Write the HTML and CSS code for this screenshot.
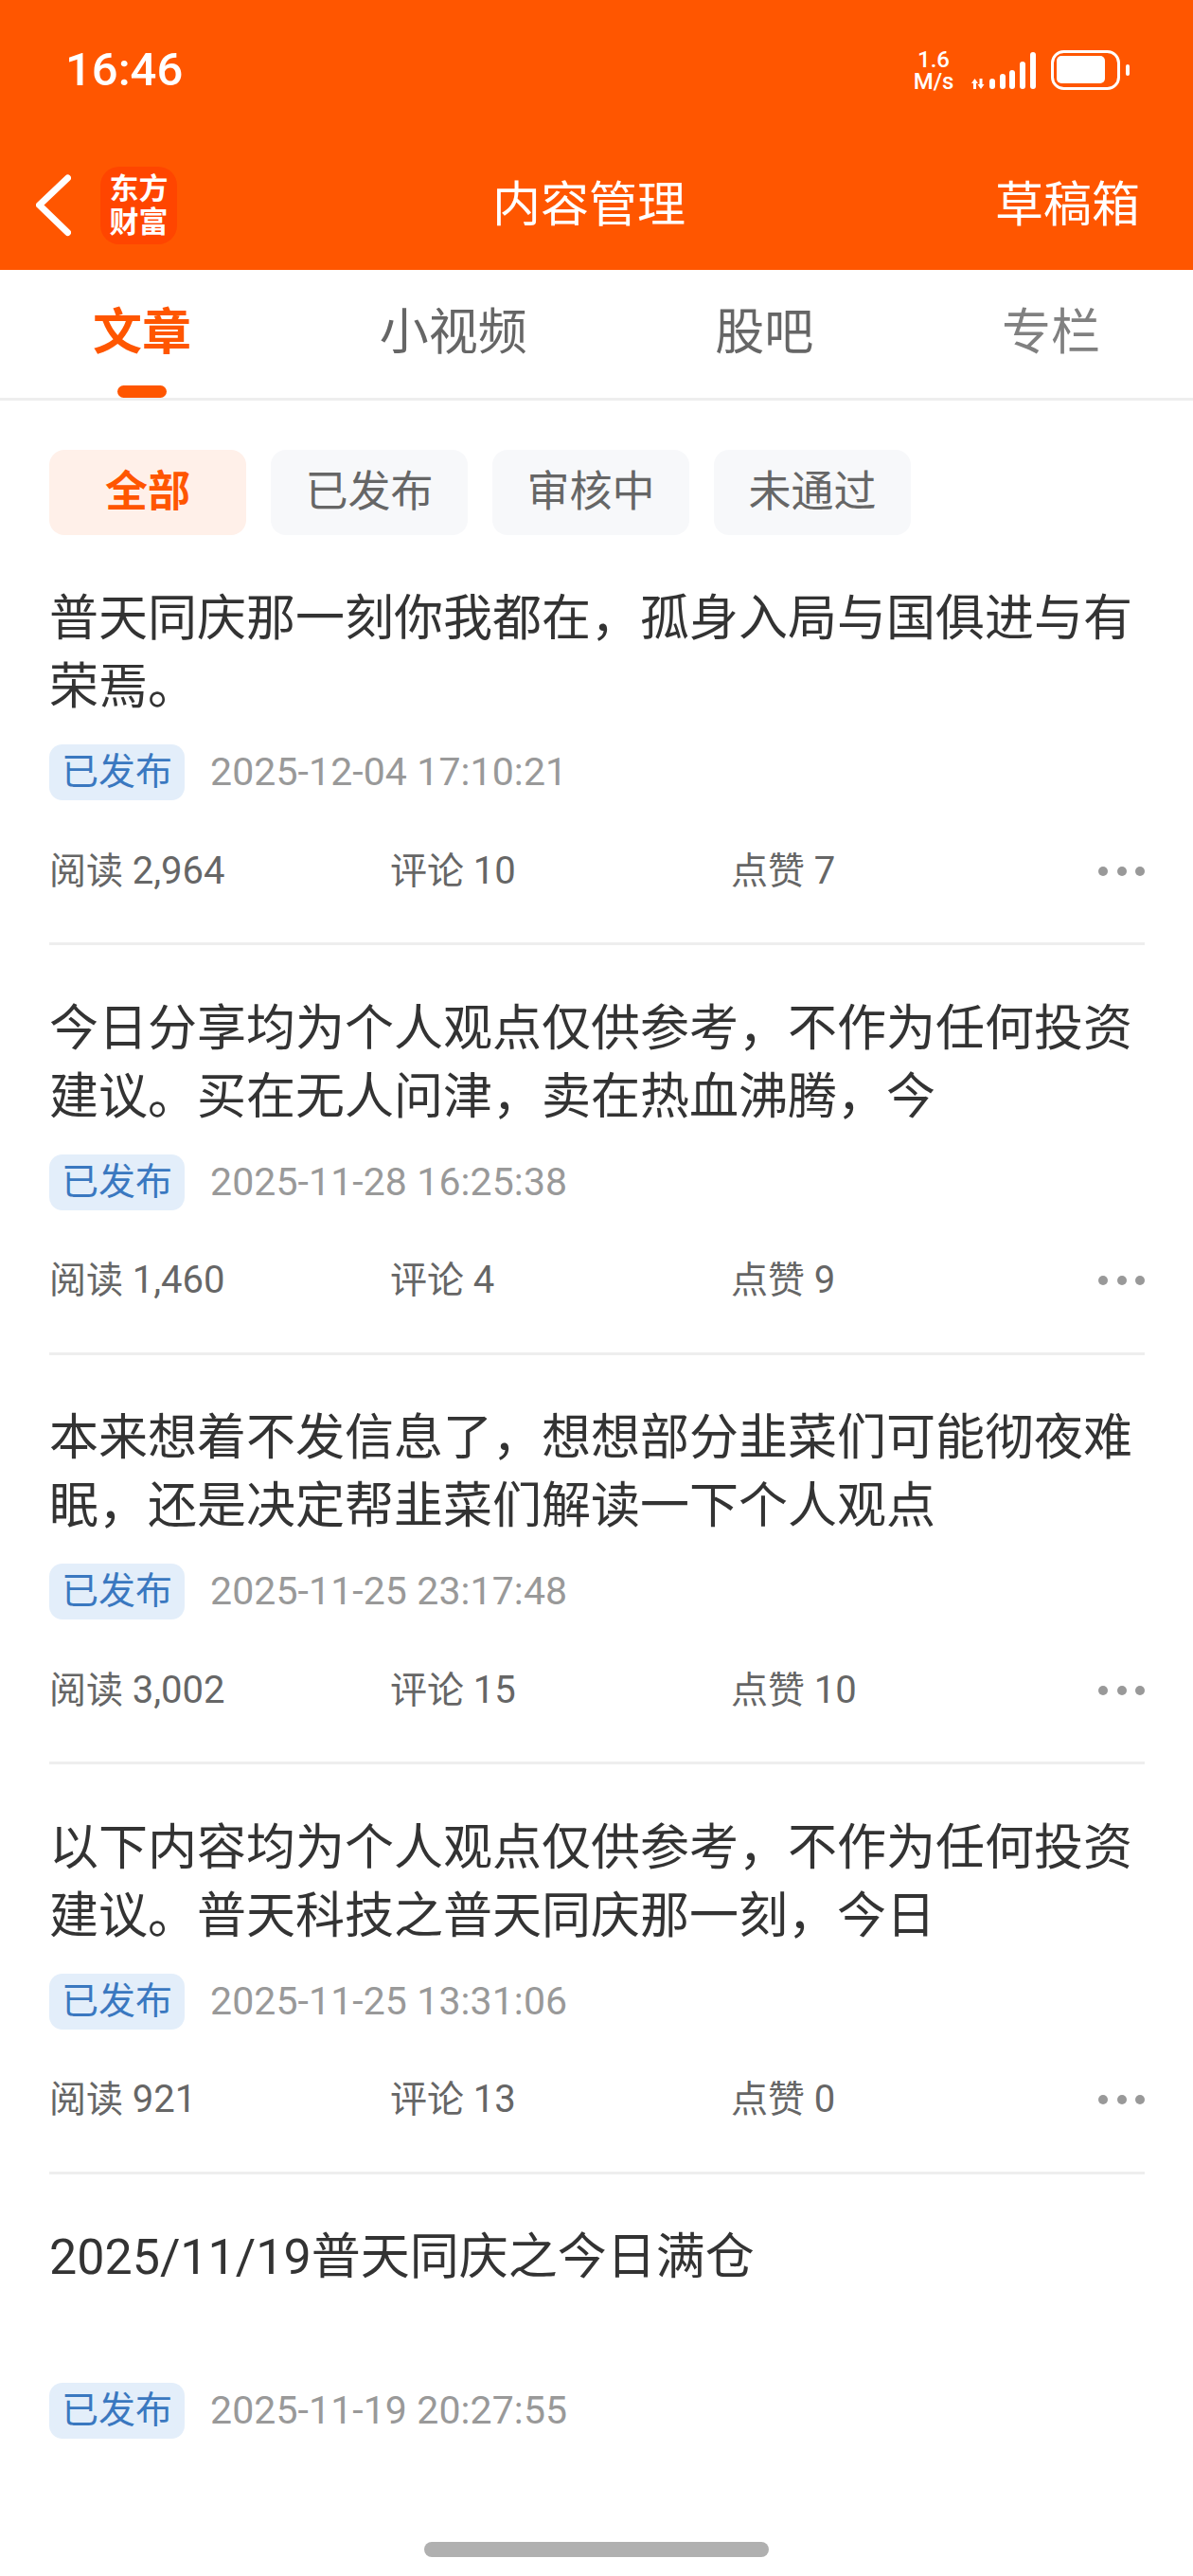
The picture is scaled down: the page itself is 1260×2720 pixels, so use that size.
FILE: index.html
```html
<!DOCTYPE html>
<html lang="zh-CN">
<head>
  <meta charset="UTF-8">
  <title>内容管理</title>
  <link rel="stylesheet" href="styles.css">
</head>
<body>
  <div class="page">
    <header class="header">
      <div class="status-bar">
        <span class="time">16:46</span>
        <div class="status-icons">
          <div class="speed"><span>1.6</span><span>M/s</span></div>
          <svg class="signal" width="68" height="42" viewBox="0 0 68 42">
            <path d="M3.500 30 7 35H5v6H2v-6H0zM10 41l3.500-5h-2v-6h-3v6h-2z" fill="#fff"/>
            <rect x="19" y="30" width="6" height="11" rx="3" fill="#fff"/>
            <rect x="30" y="25" width="6" height="16" rx="3" fill="#fff"/>
            <rect x="40" y="21" width="6" height="20" rx="3" fill="#fff"/>
            <rect x="51" y="12" width="6" height="29" rx="3" fill="#fff"/>
            <rect x="62" y="2" width="6" height="39" rx="3" fill="#fff"/>
          </svg>
          <svg class="battery" width="83" height="42" viewBox="0 0 83 42">
            <rect x="1.500" y="1.500" width="70" height="39" rx="12" fill="none" stroke="#fff" stroke-width="3"/>
            <rect x="6" y="6" width="51" height="29" rx="5" fill="#fff"/>
            <rect x="79" y="15" width="4" height="12" rx="2" fill="#fff"/>
          </svg>
        </div>
      </div>
      <div class="nav-bar">
        <div class="nav-left">
          <svg class="back" width="37" height="66" viewBox="0 0 37 66">
            <path d="M33.500 4 3.500 32.500 33.500 61.500" fill="none" stroke="#fff" stroke-width="7" stroke-linecap="round" stroke-linejoin="round"/>
          </svg>
          <div class="logo"><span>东方</span><span>财富</span></div>
        </div>
        <div class="nav-title">内容管理</div>
        <div class="nav-right">草稿箱</div>
      </div>
    </header>

    <nav class="tabs">
      <div class="tab active">文章</div>
      <div class="tab">小视频</div>
      <div class="tab">股吧</div>
      <div class="tab muted">专栏</div>
    </nav>

    <div class="filters">
      <div class="chip active">全部</div>
      <div class="chip">已发布</div>
      <div class="chip">审核中</div>
      <div class="chip">未通过</div>
    </div>

    <div class="list">
      <div class="item">
        <div class="item-title">普天同庆那一刻你我都在，孤身入局与国俱进与有荣焉。</div>
        <div class="item-meta"><span class="badge">已发布</span><span class="date">2025-12-04 17:10:21</span></div>
        <div class="item-stats">
          <span class="stat">阅读 <b>2,964</b></span>
          <span class="stat">评论 <b>10</b></span>
          <span class="stat">点赞 <b>7</b></span>
          <span class="more"><i></i><i></i><i></i></span>
        </div>
      </div>
      <div class="item">
        <div class="item-title">今日分享均为个人观点仅供参考，不作为任何投资建议。买在无人问津，卖在热血沸腾，今</div>
        <div class="item-meta"><span class="badge">已发布</span><span class="date">2025-11-28 16:25:38</span></div>
        <div class="item-stats">
          <span class="stat">阅读 <b>1,460</b></span>
          <span class="stat">评论 <b>4</b></span>
          <span class="stat">点赞 <b>9</b></span>
          <span class="more"><i></i><i></i><i></i></span>
        </div>
      </div>
      <div class="item">
        <div class="item-title">本来想着不发信息了，想想部分韭菜们可能彻夜难眠，还是决定帮韭菜们解读一下个人观点</div>
        <div class="item-meta"><span class="badge">已发布</span><span class="date">2025-11-25 23:17:48</span></div>
        <div class="item-stats">
          <span class="stat">阅读 <b>3,002</b></span>
          <span class="stat">评论 <b>15</b></span>
          <span class="stat">点赞 <b>10</b></span>
          <span class="more"><i></i><i></i><i></i></span>
        </div>
      </div>
      <div class="item">
        <div class="item-title">以下内容均为个人观点仅供参考，不作为任何投资建议。普天科技之普天同庆那一刻，今日</div>
        <div class="item-meta"><span class="badge">已发布</span><span class="date">2025-11-25 13:31:06</span></div>
        <div class="item-stats">
          <span class="stat">阅读 <b>921</b></span>
          <span class="stat">评论 <b>13</b></span>
          <span class="stat">点赞 <b>0</b></span>
          <span class="more"><i></i><i></i><i></i></span>
        </div>
      </div>
      <div class="item last">
        <div class="item-title">2025/11/19普天同庆之今日满仓</div>
        <div class="item-meta"><span class="badge">已发布</span><span class="date">2025-11-19 20:27:55</span></div>
      </div>
    </div>

    <div class="home-bar"></div>
  </div>
</body>
</html>
```

FILE: styles.css
```css
* {
  box-sizing: border-box;
}

body {
  margin: 0;
  background: #fff;
  font-family: Roboto, "Noto Sans CJK SC", sans-serif;
  color: #333;
}

.page {
  position: relative;
  width: 1260px;
  height: 2720px;
  overflow: hidden;
  background: #fff;
}

/* header */
.header {
  height: 285px;
  background: #ff5600;
  color: #fff;
}

.status-bar {
  height: 148px;
  padding: 0 67px 0 69px;
  display: flex;
  justify-content: space-between;
  align-items: center;
}

.time {
  font-size: 49px;
  font-weight: 500;
  line-height: 60px;
}

.status-icons {
  display: flex;
  align-items: center;
}

.speed {
  width: 44px;
  margin: 1px 18px 0 0;
  display: flex;
  flex-direction: column;
  align-items: center;
  font-size: 24px;
  font-weight: 500;
  line-height: 23px;
}

.signal {
  margin-right: 16px;
}

.nav-bar {
  height: 137px;
  padding: 0 56px 0 38px;
  display: flex;
  justify-content: space-between;
  align-items: center;
}

.nav-left {
  display: flex;
  align-items: center;
  gap: 31px;
}

.logo {
  width: 81px;
  height: 82px;
  border-radius: 20px;
  background: #ff4500;
  display: flex;
  flex-direction: column;
  align-items: center;
  justify-content: center;
  font-size: 31px;
  font-weight: 700;
  line-height: 35px;
}

.nav-title {
  margin-left: 6px;
  font-size: 51px;
  line-height: 70px;
}

.nav-right {
  font-size: 51px;
  line-height: 70px;
}

/* tabs */
.tabs {
  height: 138px;
  padding: 0 98px 1px;
  display: flex;
  justify-content: space-between;
  align-items: center;
  border-bottom: 3px solid #eee;
}

.tab {
  position: relative;
  font-size: 52px;
  line-height: 72px;
  color: #666;
}

.tab.muted {
  color: #808080;
}

.tab.active {
  color: #ff5600;
  font-weight: 700;
}

.tab.active::after {
  content: "";
  position: absolute;
  left: 26px;
  right: 26px;
  bottom: -32px;
  height: 13px;
  border-radius: 7px;
  background: #ff5600;
}

/* filters */
.filters {
  padding: 52px 52px 0;
  display: flex;
  gap: 26px;
}

.chip {
  width: 208px;
  height: 90px;
  border-radius: 16px;
  background: #f7f8fa;
  color: #666;
  font-size: 45px;
  line-height: 90px;
  text-align: center;
}

.chip.active {
  background: #fff0e9;
  color: #ff5600;
  font-weight: 700;
}

/* list */
.list {
  padding: 49px 51px 0 52px;
}

.item {
  padding-bottom: 47px;
  margin-bottom: 48.500px;
  border-bottom: 3px solid #eee;
}

.item.last {
  border-bottom: none;
}

.item-title {
  height: 146px;
  padding-top: 4px;
  font-size: 52px;
  line-height: 72px;
}

.item-meta {
  margin-top: 26px;
  display: flex;
  align-items: center;
}

.badge {
  width: 143px;
  height: 59px;
  border-radius: 14px;
  background: #e3eefa;
  color: #3a78c0;
  font-size: 39px;
  line-height: 58px;
  text-align: center;
}

.date {
  margin-left: 27px;
  color: #999;
  font-size: 41px;
  letter-spacing: 0.100px;
  line-height: 59px;
}

.item-stats {
  margin-top: 43px;
  height: 60px;
  padding-top: 3px;
  display: flex;
  align-items: center;
  color: #666;
  font-size: 39px;
  line-height: 57px;
}

.stat {
  width: 360px;
}

.stat b {
  font-size: 40px;
  font-weight: 400;
}

.more {
  margin-left: auto;
  display: flex;
  gap: 9.500px;
}

.more i {
  width: 10px;
  height: 10px;
  border-radius: 50%;
  background: #999;
}

.home-bar {
  position: absolute;
  left: 448px;
  bottom: 20px;
  width: 364px;
  height: 16px;
  border-radius: 8px;
  background: #b0b0b0;
}
```
